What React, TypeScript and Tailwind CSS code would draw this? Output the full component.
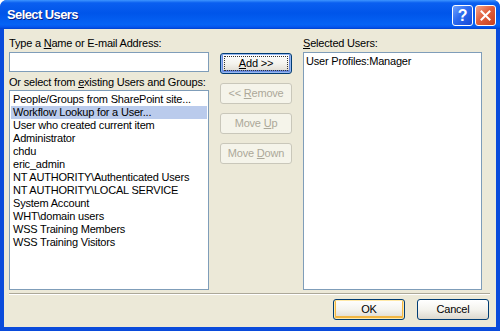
const groups = [
  "People/Groups from SharePoint site...",
  "Workflow Lookup for a User...",
  "User who created current item",
  "Administrator",
  "chdu",
  "eric_admin",
  "NT AUTHORITY\\Authenticated Users",
  "NT AUTHORITY\\LOCAL SERVICE",
  "System Account",
  "WHT\\domain users",
  "WSS Training Members",
  "WSS Training Visitors",
];

function SideButton({
  children,
  disabled,
  focused,
}: {
  children: React.ReactNode;
  disabled?: boolean;
  focused?: boolean;
}) {
  if (disabled) {
    return (
      <div className="flex h-[21px] w-[72px] items-center justify-center rounded-[3px] border border-[#C9C7BA] bg-[#F5F4EA] text-[#ACA899]">
        {children}
      </div>
    );
  }
  return (
    <div
      className={
        "flex h-[21px] w-[72px] items-center justify-center rounded-[3px] border border-[#003C74] bg-gradient-to-b from-[#FFFFFF] via-[#F4F3EE] to-[#DCD8CE] text-black " +
        (focused
          ? "shadow-[inset_0_0_0_1px_#97B8F0,inset_0_-1px_0_2px_#6D8DE0]"
          : "")
      }
    >
      {focused ? (
        <div className="flex h-[15px] w-[64px] items-center justify-center border border-dotted border-[#333]">
          {children}
        </div>
      ) : (
        children
      )}
    </div>
  );
}

export default function App() {
  return (
    <div className="flex h-[331px] w-[500px] flex-col overflow-hidden rounded-t-[7px] bg-[#0A4BDB] font-['Liberation_Sans',Arial,sans-serif] text-[11px] leading-[13px] tracking-[-0.2px] text-black">
      {/* title bar */}
      <div className="flex h-[29px] shrink-0 items-center bg-[linear-gradient(to_bottom,#3D95FF_0%,#0A5FF0_10%,#0055EA_45%,#0563F5_85%,#0456EE_93%,#0041CF_100%)] pr-[4px] pl-[7px]">
        <span className="font-['Liberation_Sans',Arial,sans-serif] text-[13px] leading-none font-bold tracking-[-0.6px] text-white [text-shadow:1px_1px_0_#0A1E80]">
          Select Users
        </span>
        <div className="ml-auto flex gap-[2px] pt-[2px]">
          <div className="flex h-[21px] w-[21px] items-center justify-center rounded-[3px] border border-white bg-[linear-gradient(135deg,#6FA2FF_0%,#2C6BEF_45%,#1548D8_100%)] text-[16px] leading-none font-bold text-white">
            ?
          </div>
          <div className="flex h-[21px] w-[21px] items-center justify-center rounded-[3px] border border-white bg-[linear-gradient(135deg,#F3A58A_0%,#E1603E_45%,#C8401E_100%)]">
            <svg width="11" height="11" viewBox="0 0 11 11">
              <path
                d="M1.5 1.5 L9.5 9.5 M9.5 1.5 L1.5 9.5"
                stroke="white"
                strokeWidth="2"
                strokeLinecap="square"
              />
            </svg>
          </div>
        </div>
      </div>

      {/* client area */}
      <div className="mx-[4px] mb-[4px] flex flex-1 flex-col bg-[#ECE9D8] pt-[8px] pr-[6px] pl-[5px]">
        <div className="flex h-[253px]">
          {/* left column */}
          <div className="flex w-[200px] flex-col">
            <div className="h-[13px] whitespace-nowrap">
              Type a <span className="underline">N</span>ame or E-mail Address:
            </div>
            <div className="mt-[2px] h-[20px] border border-[#7F9DB9] bg-white" />
            <div className="mt-[4px] h-[13px] whitespace-nowrap">
              Or select from <span className="underline">e</span>xisting Users
              and Groups:
            </div>
            <div className="mt-[1px] h-[200px] border border-[#7F9DB9] bg-white px-px pt-[2px]">
              {groups.map((g, i) => (
                <div
                  key={g}
                  className={
                    "h-[13px] px-[2px] whitespace-nowrap " +
                    (i === 1 ? "bg-[#BACBEC]" : "")
                  }
                >
                  {g}
                </div>
              ))}
            </div>
          </div>

          {/* middle buttons */}
          <div className="ml-[11px] flex w-[72px] flex-col gap-[9px] pt-[16px]">
            <SideButton focused>
              <span>
                <span className="underline">A</span>dd &gt;&gt;
              </span>
            </SideButton>
            <SideButton disabled>
              <span>
                &lt;&lt; <span className="underline">R</span>emove
              </span>
            </SideButton>
            <SideButton disabled>
              <span>
                Move <span className="underline">U</span>p
              </span>
            </SideButton>
            <SideButton disabled>
              <span>
                Move <span className="underline">D</span>own
              </span>
            </SideButton>
          </div>

          {/* right column */}
          <div className="ml-[11px] flex w-[179px] flex-col">
            <div className="h-[13px]">
              <span className="underline">S</span>elected Users:
            </div>
            <div className="mt-[2px] h-[238px] border border-[#7F9DB9] bg-white px-[2px] pt-[2px]">
              User Profiles:Manager
            </div>
          </div>
        </div>

        <div className="mt-[3px] h-[2px] border-t border-b border-t-[#ACA899] border-b-white" />

        <div className="mt-[4px] flex justify-end gap-[12px] pr-px">
          <div className="flex h-[21px] w-[72px] items-center justify-center rounded-[3px] border border-[#003C74] bg-gradient-to-b from-[#FFFFFF] via-[#F4F3EE] to-[#DCD8CE] shadow-[inset_0_0_0_1px_#FFE9A8,inset_0_-1px_0_2px_#F2B643]">
            OK
          </div>
          <div className="flex h-[21px] w-[72px] items-center justify-center rounded-[3px] border border-[#003C74] bg-gradient-to-b from-[#FFFFFF] via-[#F4F3EE] to-[#DCD8CE]">
            Cancel
          </div>
        </div>
      </div>
    </div>
  );
}
